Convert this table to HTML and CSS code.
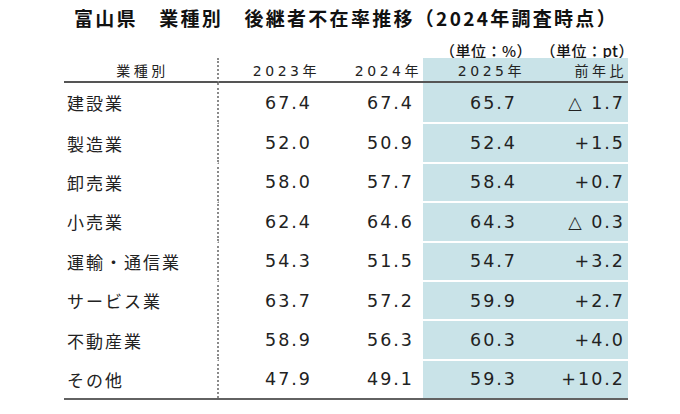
FILE: index.html
```html
<!DOCTYPE html>
<html lang="ja">
<head>
<meta charset="utf-8">
<title>富山県 業種別 後継者不在率推移</title>
<link rel="stylesheet" href="styles.css">
</head>
<body>
<div class="sheet">
  <h1 class="title">富山県　業種別　後継者不在率推移（2024年調査時点）</h1>
  <div class="table">
    <div class="row units">
      <div class="cell blank"></div>
      <div class="cell unit">（単位：%）</div>
      <div class="cell unit">（単位：pt）</div>
    </div>
    <div class="row head">
      <div class="cell lbl">業種別</div>
      <div class="cell num">2023年</div>
      <div class="cell num">2024年</div>
      <div class="cell num hl">2025年</div>
      <div class="cell num hl diff">前年比</div>
    </div>
    <div class="row data">
      <div class="cell lbl">建設業</div>
      <div class="cell num">67.4</div>
      <div class="cell num">67.4</div>
      <div class="cell num hl">65.7</div>
      <div class="cell num hl diff">△ 1.7</div>
    </div>
    <div class="row data">
      <div class="cell lbl">製造業</div>
      <div class="cell num">52.0</div>
      <div class="cell num">50.9</div>
      <div class="cell num hl">52.4</div>
      <div class="cell num hl diff">+1.5</div>
    </div>
    <div class="row data">
      <div class="cell lbl">卸売業</div>
      <div class="cell num">58.0</div>
      <div class="cell num">57.7</div>
      <div class="cell num hl">58.4</div>
      <div class="cell num hl diff">+0.7</div>
    </div>
    <div class="row data">
      <div class="cell lbl">小売業</div>
      <div class="cell num">62.4</div>
      <div class="cell num">64.6</div>
      <div class="cell num hl">64.3</div>
      <div class="cell num hl diff">△ 0.3</div>
    </div>
    <div class="row data">
      <div class="cell lbl">運輸・通信業</div>
      <div class="cell num">54.3</div>
      <div class="cell num">51.5</div>
      <div class="cell num hl">54.7</div>
      <div class="cell num hl diff">+3.2</div>
    </div>
    <div class="row data">
      <div class="cell lbl">サービス業</div>
      <div class="cell num">63.7</div>
      <div class="cell num">57.2</div>
      <div class="cell num hl">59.9</div>
      <div class="cell num hl diff">+2.7</div>
    </div>
    <div class="row data">
      <div class="cell lbl">不動産業</div>
      <div class="cell num">58.9</div>
      <div class="cell num">56.3</div>
      <div class="cell num hl">60.3</div>
      <div class="cell num hl diff">+4.0</div>
    </div>
    <div class="row data">
      <div class="cell lbl">その他</div>
      <div class="cell num">47.9</div>
      <div class="cell num">49.1</div>
      <div class="cell num hl">59.3</div>
      <div class="cell num hl diff">+10.2</div>
    </div>
  </div>
</div>
</body>
</html>
```

FILE: styles.css
```css
html, body {
  margin: 0;
  padding: 0;
  background: #ffffff;
}

body {
  font-family: "Noto Sans CJK JP", "Noto Sans", sans-serif;
  color: #222222;
  text-spacing-trim: space-all;
}

.sheet {
  width: 564px;
  margin-left: 64px;
}

.title {
  margin: 0;
  padding-top: 5px;
  font-size: 19px;
  line-height: 26px;
  font-weight: 700;
  letter-spacing: 2.3px;
  text-align: center;
  white-space: nowrap;
  color: #111111;
}

.table {
  display: grid;
  grid-template-columns: 155px 102px 102px 103px 102px;
  grid-template-rows: 16px 25px repeat(8, 39.4px);
  margin-top: 11px;
  border-bottom: 2px solid #626262;
}

.row {
  display: contents;
}

.cell {
  display: flex;
  align-items: center;
  box-sizing: border-box;
  white-space: nowrap;
  min-width: 0;
}

.blank {
  grid-column: 1 / 4;
}

.units .unit {
  justify-content: flex-end;
  font-size: 15px;
  font-weight: 500;
  letter-spacing: 0.5px;
  margin-right: -6px;
  color: #151515;
}

.head .cell {
  border-bottom: 2px solid #555555;
  font-size: 14px;
  letter-spacing: 3.5px;
  justify-content: flex-end;
  padding-right: 1px;
}

.head .lbl {
  justify-content: center;
  padding-left: 4px;
  padding-right: 0;
  font-family: "Noto Sans CJK JP", sans-serif;
}

.lbl {
  border-right: 2px dotted #8a8a8a;
}

.data .lbl {
  font-size: 17px;
  letter-spacing: 2px;
  padding-left: 3px;
}

.num {
  font-family: "DejaVu Sans", "Noto Sans CJK JP", sans-serif;
  justify-content: flex-end;
}

.head .diff {
  font-family: "Noto Sans CJK JP", sans-serif;
}

.data .num {
  font-size: 17.5px;
  letter-spacing: 2px;
  padding-right: 9px;
}

.data .diff {
  padding-right: 3px;
}

.hl {
  background: #c9e3e8;
}

.data + .data .cell {
  border-top: 2px solid transparent;
}

.data + .data .hl {
  border-top-color: #ffffff;
}
```
